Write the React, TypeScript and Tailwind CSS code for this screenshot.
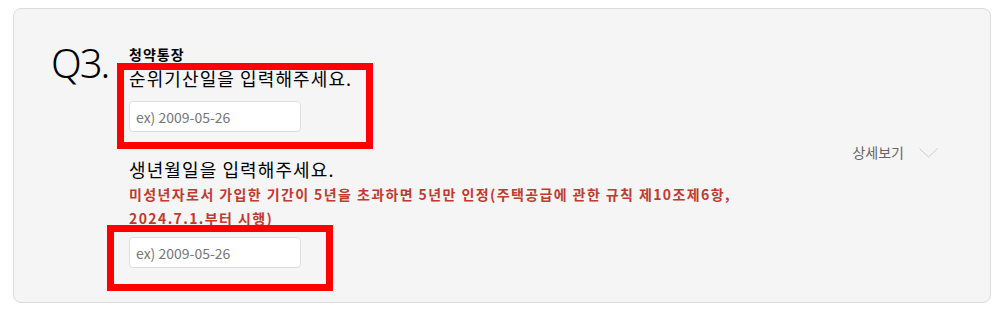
// ============================================================
// Constants
// ============================================================

const KR_FONT = "font-['Noto_Sans_CJK_KR','Noto_Sans',sans-serif]"

// ============================================================
// Pieces
// ============================================================

function DateInput() {
  return (
    <input
      type="text"
      placeholder="ex) 2009-05-26"
      className={`${KR_FONT} h-[31px] w-[172px] rounded-[4px] border border-[#dedede] bg-white px-[6px] text-[14px] text-[#333] outline-none placeholder:text-[#767676]`}
    />
  )
}

function Chevron() {
  return (
    <svg width="19" height="10" viewBox="0 0 19 10" fill="none" className="text-[#cccccc]">
      <polyline points="0.5,0.5 9.5,9 18.5,0.5" stroke="currentColor" strokeWidth="1" />
    </svg>
  )
}

// ============================================================
// Component
// ============================================================

export default function App() {
  return (
    <div className="min-h-screen bg-white pl-[13px] pt-[8px]">
      <div className="relative flex h-[295px] w-[978px] rounded-lg border border-[#dcdcdc] bg-[#f5f5f5]">
        {/* question number */}
        <div className="w-[115px] shrink-0 pl-[37px] pt-[34px]">
          <span className="font-['Noto_Sans',sans-serif] text-[40px] leading-none font-light tracking-[-2px] text-black">
            Q3.
          </span>
        </div>

        {/* fields */}
        <div className={`${KR_FONT} flex-1 pt-[35px] text-black`}>
          <p className="text-[14px] leading-[20px] font-bold tracking-[1px]">청약통장</p>
          <p className="mt-[1px] text-[18px] leading-[26px] tracking-[1.1px]">
            순위기산일을 입력해주세요.
          </p>
          <div className="mt-[10px]">
            <DateInput />
          </div>

          <p className="mt-[24px] text-[18px] leading-[26px] tracking-[1.1px]">
            생년월일을 입력해주세요.
          </p>
          <p className="text-[14px] leading-[24px] font-bold tracking-[1.4px] text-[#c03a30]">
            미성년자로서 가입한 기간이 5년을 초과하면 5년만 인정(주택공급에 관한 규칙 제10조제6항,
            <br />
            2024.7.1.부터 시행)
          </p>
          <div className="mt-[7px]">
            <DateInput />
          </div>
        </div>

        {/* detail toggle */}
        <button
          type="button"
          className={`${KR_FONT} mr-[52px] -mt-[6px] flex shrink-0 items-center gap-[15px] self-center text-[14px] text-[#666]`}
        >
          상세보기
          <Chevron />
        </button>

        {/* annotation boxes */}
        <div className="pointer-events-none absolute left-[103px] top-[54px] h-[86px] w-[256px] border-[7px] border-[#ff0000]" />
        <div className="pointer-events-none absolute left-[93px] top-[216px] h-[66px] w-[226px] border-[7px] border-[#ff0000]" />
      </div>
    </div>
  )
}
